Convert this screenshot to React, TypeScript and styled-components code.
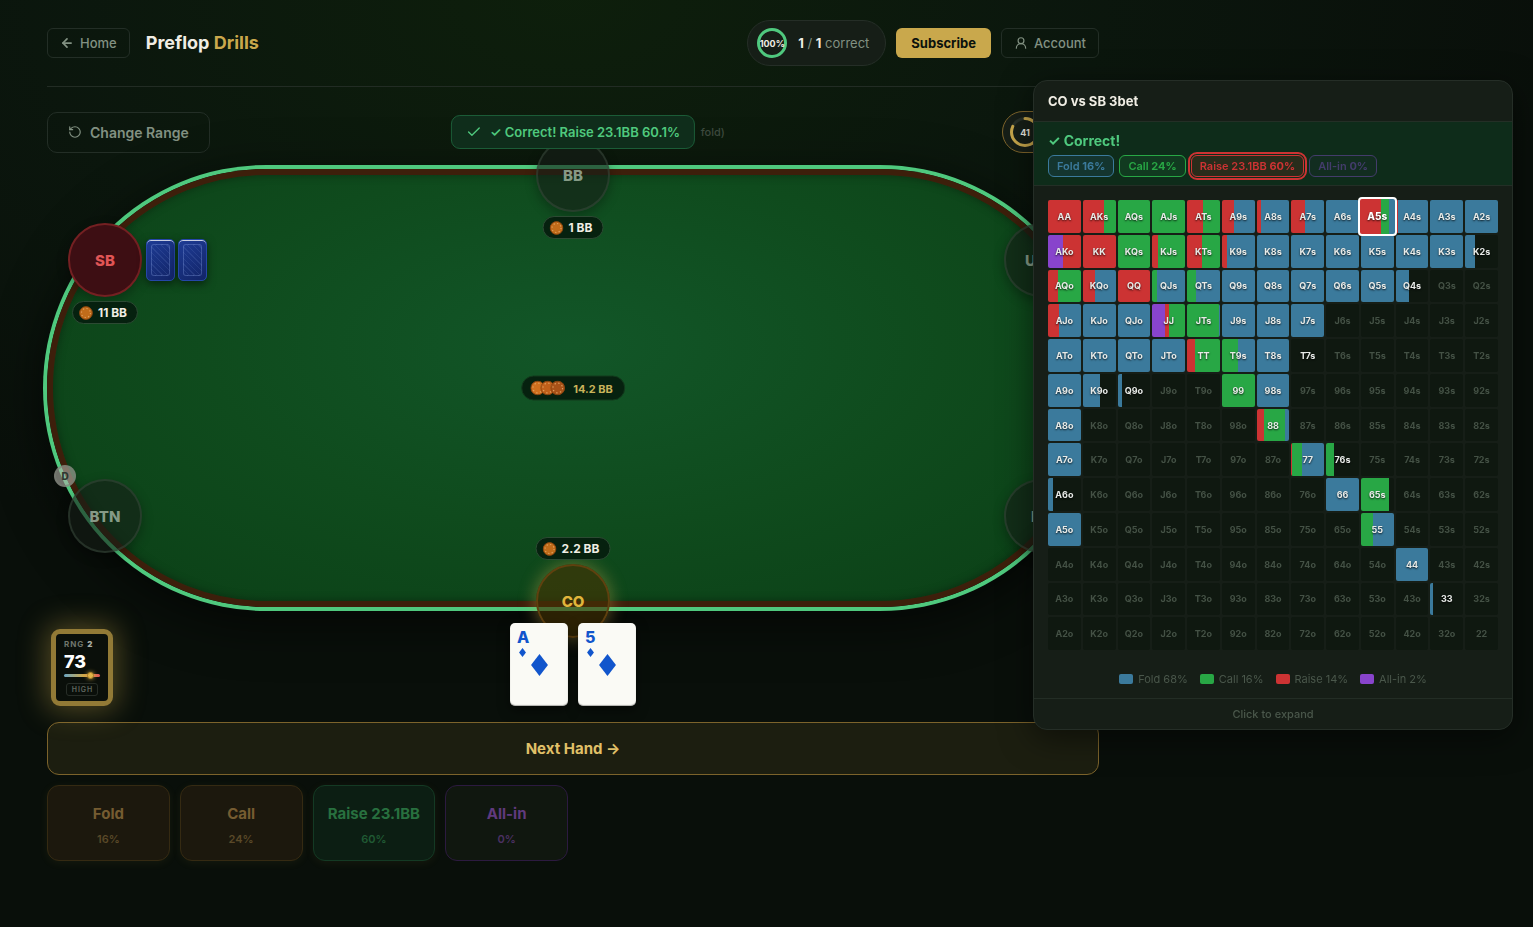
import React from 'react';
import styled, { createGlobalStyle, css } from 'styled-components';
import { ArrowLeft, Check, RotateCcw, UserRound } from 'lucide-react';

const GlobalStyle = createGlobalStyle`
  *, *::before, *::after { box-sizing: border-box; }
  body {
    margin: 0;
    min-height: 100vh;
    background:
      radial-gradient(ellipse 65% 65% at 37% 0%, rgba(15, 36, 12, 0.75), rgba(14, 34, 18, 0.4) 50%, transparent 100%),
      #090f0a;
    color: #f0ede4;
    font-family: Inter, "Liberation Sans", sans-serif;
    font-size: 13px;
  }
  button { font-family: inherit; cursor: pointer; }
  a { text-decoration: none; }
`;

const Shell = styled.div`
  padding-right: 387px;
`;

const Main = styled.main`
  max-width: 1100px;
  margin: 0 auto;
  padding: 0 24px 40px;
`;

const Header = styled.header`
  display: flex;
  align-items: center;
  justify-content: space-between;
  padding: 20px 0;
  border-bottom: 1px solid #222c24;
  margin-bottom: 24px;
`;

const Group = styled.div<{ $gap: number }>`
  display: flex;
  align-items: center;
  gap: ${(p) => p.$gap}px;
`;

const outline = css`
  display: inline-flex;
  align-items: center;
  background: transparent;
  border: 1px solid #232e26;
  color: #829182;
  font-weight: 500;
`;

const NavLink = styled.a`
  ${outline}
  gap: 6px;
  height: 30px;
  padding: 0 12px;
  border-radius: 6px;
  font-size: 13px;
`;

const Title = styled.h1`
  margin: 0;
  font-size: 18px;
  line-height: 24px;
  font-weight: 700;
  span { color: #c9a84c; }
`;

const Stats = styled.div`
  display: flex;
  align-items: center;
  gap: 11px;
  padding: 7px 16px 7px 9px;
  border: 1px solid #252e27;
  border-radius: 23px;
  background: #161e17;
  color: #829182;
  font-size: 13px;
  b { color: #f0ede4; font-weight: 700; }
`;

const Subscribe = styled.button`
  height: 30px;
  padding: 0 15px;
  border: 0;
  border-radius: 6px;
  background: #c9a84c;
  color: #0c120c;
  font-size: 13px;
  font-weight: 700;
`;

const RingBox = styled.div`
  display: grid;
  place-items: center;
  width: 30px;
  height: 30px;
  > * { grid-area: 1 / 1; }
  span { font-size: 9px; font-weight: 700; color: #f0ede4; }
`;

const Controls = styled.div`
  position: relative;
  display: flex;
  align-items: center;
  justify-content: space-between;
  margin-bottom: 16px;
`;

const ChangeRange = styled.button`
  ${outline}
  gap: 8px;
  height: 41px;
  padding: 0 20px;
  border-radius: 10px;
  font-size: 14px;
  font-weight: 600;
`;

const Hint = styled.div`
  min-width: 238px;
  text-align: right;
  font-size: 11px;
  font-weight: 500;
  color: #3e4b3f;
`;

const Timer = styled.div`
  width: 97px;
  padding: 5px 7px;
  border: 1px solid #80662c;
  border-radius: 21px;
  background: #161e17;
`;

const Toast = styled.div`
  position: absolute;
  z-index: 5;
  top: 4px;
  left: 50%;
  transform: translateX(-50%);
  display: flex;
  align-items: center;
  gap: 8px;
  height: 34px;
  padding: 0 14px;
  border: 1px solid #1b5c37;
  border-radius: 9px;
  background: #0f2d1b;
  color: #4fc97e;
  font-size: 13px;
  font-weight: 600;
  white-space: nowrap;
`;

const Table = styled.section`
  position: relative;
  aspect-ratio: 2.4;
  border: 6px solid #3d1f0b;
  border-radius: 999px;
  background: radial-gradient(ellipse at 50% 40%, #125628 0%, #0f4b1d 50%, #0b3f16 100%);
  box-shadow:
    0 0 0 4px #4fc97e,
    0 12px 50px 4px rgba(0, 0, 0, 0.6),
    inset 0 0 10px rgba(0, 0, 0, 0.35);
`;

type Tone = 'plain' | 'red' | 'gold';

const tones = {
  plain: css`
    background: rgba(22, 30, 23, 0.6);
    border-color: rgba(60, 76, 62, 0.5);
    color: rgba(155, 175, 155, 0.85);
  `,
  red: css`
    background: #3d0e13;
    border-color: #742022;
    color: #e05555;
  `,
  gold: css`
    background: rgba(70, 50, 4, 0.62);
    border-color: #60410f;
    color: #e0b53c;
    box-shadow: 0 0 16px 2px rgba(201, 168, 76, 0.4);
  `,
};

const Seat = styled.div<{ $x: number; $y: number; $tone: Tone }>`
  position: absolute;
  left: ${(p) => p.$x}%;
  top: ${(p) => p.$y}%;
  transform: translate(-50%, -50%);
  display: flex;
  align-items: center;
  justify-content: center;
  width: 74px;
  height: 74px;
  border: 2px solid;
  border-radius: 50%;
  box-shadow: 0 4px 12px rgba(0, 0, 0, 0.3);
  font-size: 15px;
  font-weight: 800;
  ${(p) => tones[p.$tone]}
`;

const Bet = styled.div<{ $above?: boolean }>`
  position: absolute;
  left: 50%;
  ${(p) => (p.$above ? 'bottom: calc(100% + 6px);' : 'top: calc(100% + 6px);')}
  transform: translateX(-50%);
  display: flex;
  align-items: center;
  gap: 5px;
  height: 23px;
  padding: 0 10px 0 6px;
  border: 1px solid #2c4a33;
  border-radius: 12px;
  background: #06210f;
  color: #f0ede4;
  font-size: 12px;
  font-weight: 700;
  white-space: nowrap;
`;

const Pot = styled.div`
  position: absolute;
  left: 50%;
  top: 50%;
  transform: translate(-50%, -50%);
  display: flex;
  align-items: center;
  gap: 8px;
  height: 25px;
  padding: 0 11px 0 8px;
  border: 1px solid #123a1c;
  border-radius: 13px;
  background: #06210f;
  color: #c9b35a;
  font-size: 11px;
  font-weight: 700;
  white-space: nowrap;
`;

const ChipStack = styled.div`
  display: flex;
  svg + svg { margin-left: -5px; }
`;

const BackCards = styled.div`
  position: absolute;
  left: calc(100% + 6px);
  top: 50%;
  transform: translateY(-50%);
  display: flex;
  gap: 3px;
`;

const BackCard = styled.div`
  width: 29px;
  height: 42px;
  padding: 4px;
  border: 1px solid #2546a8;
  border-radius: 5px;
  background: linear-gradient(145deg, #1e3c96, #122466);
  box-shadow: 0 3px 8px rgba(0, 0, 0, 0.5), inset 0 1px 0 rgba(255, 255, 255, 0.75);
  &::before {
    content: '';
    display: block;
    height: 100%;
    border: 1px solid rgba(130, 155, 220, 0.35);
    border-radius: 3px;
    background: repeating-linear-gradient(45deg, transparent 0 3px, rgba(130, 155, 220, 0.14) 3px 4px);
  }
`;

const Dealer = styled.div`
  position: absolute;
  left: -16px;
  top: -16px;
  display: flex;
  align-items: center;
  justify-content: center;
  width: 22px;
  height: 22px;
  border: 2px solid rgba(120, 125, 115, 0.6);
  border-radius: 50%;
  background: rgba(180, 180, 172, 0.6);
  color: #2f372f;
  font-size: 10px;
  font-weight: 800;
`;

const HandRow = styled.div`
  position: relative;
  z-index: 2;
  display: grid;
  grid-template-columns: 1fr auto 1fr;
  align-items: end;
  margin: 16px 0;
`;

const Rng = styled.div`
  display: flex;
  flex-direction: column;
  justify-self: start;
  width: 62px;
  height: 77px;
  margin-left: 4px;
  padding: 5px 8px;
  border: 5px solid #927a36;
  border-radius: 9px;
  background: #0a0f0a;
  box-shadow: 0 0 28px 5px rgba(201, 168, 76, 0.36);
`;

const RngLabel = styled.div`
  font-size: 8px;
  line-height: 10px;
  font-weight: 700;
  letter-spacing: 1px;
  color: #70766c;
  white-space: nowrap;
  b { color: #a9ada4; }
`;

const RngValue = styled.div`
  font-size: 18px;
  line-height: 25px;
  font-weight: 800;
  color: #ffffff;
`;

const RngBar = styled.div`
  position: relative;
  flex: none;
  height: 3px;
  border-radius: 2px;
  background: linear-gradient(90deg, #6aa6c4, #d0a848 55%, #e05555);
`;

const RngDot = styled.i`
  position: absolute;
  top: -2px;
  width: 7px;
  height: 7px;
  margin-left: -3px;
  border: 1px solid #a37b25;
  border-radius: 50%;
  background: #e2b548;
  box-shadow: 0 0 4px rgba(226, 181, 72, 0.8);
`;

const RngTag = styled.div`
  align-self: center;
  margin-top: 6px;
  padding: 0 4px 0 5px;
  border: 1px solid #272d27;
  border-radius: 3px;
  font-size: 7px;
  line-height: 11px;
  font-weight: 600;
  letter-spacing: 1px;
  color: #60675e;
`;

const Hand = styled.div`
  display: flex;
  gap: 10px;
`;

const Card = styled.div`
  display: flex;
  flex-direction: column;
  align-items: flex-start;
  width: 58px;
  height: 83px;
  padding: 4px 7px;
  border-radius: 5px;
  background: #fafaf5;
  box-shadow: 0 4px 12px rgba(0, 0, 0, 0.5), inset 0 -1px 1px rgba(0, 0, 0, 0.3);
  color: #1155cc;
  b { font-size: 16px; line-height: 20px; font-weight: 800; }
`;

const SmallPip = styled.svg`
  width: 7px;
  height: 9px;
  margin: 1px 2px 0;
`;

const BigPip = styled.svg`
  width: 17px;
  height: 22px;
  align-self: center;
  margin-top: -3px;
`;

const NextHand = styled.button`
  display: block;
  width: 100%;
  height: 53px;
  margin-bottom: 10px;
  border: 1px solid #7c632b;
  border-radius: 12px;
  background: rgba(201, 168, 76, 0.1);
  color: #e0c068;
  font-size: 15px;
  font-weight: 700;
`;

const Actions = styled.div`
  display: grid;
  grid-template-columns: repeat(auto-fill, minmax(120px, 1fr));
  gap: 10px;
`;

const actionTones = {
  brown: css`
    background: #1c180d;
    border-color: #352a12;
    color: #755c31;
    small { color: #5a4928; }
  `,
  green: css`
    background: #0c1e13;
    border-color: #143a24;
    color: #28703f;
    small { color: #205a34; }
  `,
  violet: css`
    background: #10170f;
    border-color: #2c1a40;
    color: #603a7e;
    box-shadow: none;
    small { color: #4b3062; }
  `,
};

const Action = styled.button<{ $tone: keyof typeof actionTones }>`
  display: flex;
  flex-direction: column;
  align-items: center;
  justify-content: center;
  gap: 8px;
  height: 76px;
  padding: 6px 0 0;
  border: 1px solid;
  border-radius: 12px;
  box-shadow: 0 2px 10px rgba(201, 168, 76, 0.07);
  font-size: 15px;
  line-height: 18px;
  font-weight: 700;
  white-space: nowrap;
  small { font-size: 11px; line-height: 16px; font-weight: 600; }
  ${(p) => actionTones[p.$tone]}
`;

const Panel = styled.aside`
  position: fixed;
  z-index: 20;
  top: 80px;
  right: 20px;
  width: 480px;
  overflow: hidden;
  border: 1px solid #252e27;
  border-radius: 14px;
  background: #161e17;
  box-shadow: 0 8px 32px rgba(0, 0, 0, 0.5);
`;

const PanelTitle = styled.h2`
  margin: 0;
  padding: 10px 14px;
  font-size: 13px;
  line-height: 20px;
  font-weight: 700;
`;

const Verdict = styled.div`
  padding: 9px 14px 8px;
  border: 1px solid #232f26;
  border-width: 1px 0;
  background: #0e2c1a;
  p {
    margin: 0 0 4px;
    font-size: 14px;
    line-height: 20px;
    font-weight: 700;
    color: #4fc97e;
  }
`;

const Chip = styled.span<{ $ink: string; $fill: string; $picked?: boolean }>`
  height: 22px;
  padding: 0 8px;
  border: 1px solid ${(p) => p.$ink};
  border-radius: 6px;
  background: ${(p) => p.$fill};
  color: ${(p) => p.$ink};
  font-size: 11px;
  line-height: 21px;
  font-weight: 600;
  white-space: nowrap;
  b { font-weight: 700; }
  ${(p) => p.$picked && css`outline: 2px solid ${p.$ink}; outline-offset: 1px;`}
`;

const Matrix = styled.table`
  display: grid;
  grid-template-columns: repeat(13, 1fr);
  gap: 2px;
  padding: 14px;
  tbody, tr { display: contents; }
`;

const Cell = styled.td<{ $state: 'off' | 'on' | 'picked' }>`
  display: flex;
  align-items: center;
  justify-content: center;
  aspect-ratio: 1;
  min-width: 0;
  padding: 0;
  border-radius: 2px;
  background-color: #0f1810;
  color: #445145;
  font-size: 9px;
  font-weight: 700;
  ${(p) => p.$state !== 'off' && css`
    color: #e8ebe8;
    text-shadow: 0 1px 2px rgba(0, 0, 0, 0.8);
  `}
  ${(p) => p.$state === 'picked' && css`
    position: relative;
    z-index: 1;
    margin: -1px;
    box-shadow: 0 0 0 2px #ffffff;
    color: #ffffff;
    font-size: 10px;
    font-weight: 800;
  `}
`;

const Legend = styled.div`
  display: flex;
  justify-content: center;
  gap: 12px;
  padding: 7px 0 11px;
  color: #4a574b;
  font-size: 11px;
  line-height: 16px;
  span { display: flex; align-items: center; gap: 5px; }
`;

const Swatch = styled.i<{ $color: string }>`
  width: 14px;
  height: 10px;
  border-radius: 2px;
  background: ${(p) => p.$color};
`;

const Expand = styled.button`
  display: block;
  width: 100%;
  height: 31px;
  padding: 0;
  border: 0;
  border-top: 1px solid #232d25;
  background: transparent;
  color: #4a574b;
  font-size: 11px;
  font-weight: 500;
`;

function Ring({ value, label, color, width }: { value: number; label: string; color: string; width: number }) {
  const r = 15 - width / 2;
  return (
    <RingBox>
      <svg width="30" height="30" viewBox="0 0 30 30" fill="none" aria-hidden="true">
        <circle cx="15" cy="15" r={r} stroke="#273029" strokeWidth={width} />
        <circle
          cx="15"
          cy="15"
          r={r}
          stroke={color}
          strokeWidth={width}
          strokeLinecap="round"
          pathLength={100}
          strokeDasharray={`${value} 100`}
          transform="rotate(-90 15 15)"
        />
      </svg>
      <span>{label}</span>
    </RingBox>
  );
}

function PokerChip({ size, fill = '#c06c1a' }: { size: number; fill?: string }) {
  return (
    <svg width={size} height={size} viewBox="0 0 14 14" aria-hidden="true">
      <circle cx="7" cy="7" r="6.4" fill={fill} stroke="#8a4510" strokeWidth="0.9" />
      <circle cx="7" cy="7" r="4.5" fill="none" stroke="#e0a060" strokeWidth="1.1" strokeDasharray="1.2 2.334" />
    </svg>
  );
}

const Diamond = () => <path d="M5 0 10 6.5 5 13 0 6.5Z" fill="currentColor" />;

function FaceCard({ rank }: { rank: string }) {
  return (
    <Card>
      <b>{rank}</b>
      <SmallPip viewBox="0 0 10 13" aria-hidden="true"><Diamond /></SmallPip>
      <BigPip viewBox="0 0 10 13" aria-hidden="true"><Diamond /></BigPip>
    </Card>
  );
}

const colors = { f: '#3b7a9c', c: '#28a745', r: '#cc3333', a: '#8844cc' };
type Move = keyof typeof colors;
type Mix = [Move, number][];

const ranks = 'AKQJT98765432'.split('');
const pure: Record<string, Move> = {};
const addPure = (move: Move, hands: string) => hands.split(' ').forEach((h) => { pure[h] = move; });
addPure('r', 'AA KK QQ');
addPure('c', 'AQs AJs KQs 99');
addPure('f', 'A6s A3s A2s K8s K7s K6s K5s K4s K3s Q9s Q8s Q7s Q6s Q5s KJo QJo J9s J8s J7s ATo KTo QTo JTo T8s A9o 98s A8o A7o 66 A5o 44');

const mixed: Record<string, Mix> = {
  AKs: [['r', 64], ['c', 36]],
  ATs: [['r', 48], ['c', 52]],
  A9s: [['r', 36], ['f', 64]],
  A8s: [['r', 12], ['f', 88]],
  A7s: [['r', 42], ['f', 58]],
  A5s: [['r', 60], ['c', 24], ['f', 16]],
  A4s: [['r', 6], ['f', 94]],
  AKo: [['a', 45], ['r', 55]],
  KJs: [['r', 18], ['c', 82]],
  KTs: [['r', 45], ['c', 55]],
  K9s: [['r', 15], ['f', 85]],
  K2s: [['f', 30]],
  AQo: [['r', 30], ['c', 70]],
  KQo: [['r', 36], ['f', 64]],
  QJs: [['c', 15], ['f', 85]],
  QTs: [['c', 27], ['f', 73]],
  Q4s: [['f', 40]],
  AJo: [['r', 33], ['f', 67]],
  JJ: [['a', 40], ['r', 12], ['c', 48]],
  JTs: [['c', 97], ['f', 3]],
  TT: [['r', 24], ['c', 76]],
  T9s: [['c', 48], ['f', 52]],
  T7s: [],
  K9o: [['f', 51]],
  Q9o: [['f', 12]],
  '88': [['r', 21], ['c', 68], ['f', 11]],
  '77': [['r', 3], ['c', 30], ['f', 67]],
  '76s': [['c', 24]],
  A6o: [['f', 15]],
  '65s': [['c', 86]],
  '55': [['c', 36], ['f', 64]],
  '33': [['f', 9]],
};

function handName(row: number, col: number) {
  if (row === col) return ranks[row] + ranks[row];
  return row < col ? `${ranks[row]}${ranks[col]}s` : `${ranks[col]}${ranks[row]}o`;
}

function mixOf(hand: string): Mix | undefined {
  return pure[hand] ? [[pure[hand], 100]] : mixed[hand];
}

function gradient(mix?: Mix) {
  if (!mix || mix.length === 0) return undefined;
  let at = 0;
  const stops = mix.map(([move, share]) => {
    const from = at;
    at += share;
    return `${colors[move]} ${from}% ${at}%`;
  });
  if (at < 100) stops.push(`transparent ${at}% 100%`);
  return `linear-gradient(90deg, ${stops.join(', ')})`;
}

const legend: [string, Move][] = [['Fold 68%', 'f'], ['Call 16%', 'c'], ['Raise 14%', 'r'], ['All-in 2%', 'a']];

const actions: [string, string, keyof typeof actionTones][] = [
  ['Fold', '16%', 'brown'],
  ['Call', '24%', 'brown'],
  ['Raise 23.1BB', '60%', 'green'],
  ['All-in', '0%', 'violet'],
];

function RangePanel() {
  return (
    <Panel>
      <PanelTitle>CO vs SB 3bet</PanelTitle>
      <Verdict>
        <p>✓ Correct!</p>
        <Group $gap={5}>
          <Chip $ink={colors.f} $fill="#14352f">Fold <b>16%</b></Chip>
          <Chip $ink={colors.c} $fill="#113a20">Call <b>24%</b></Chip>
          <Chip $ink={colors.r} $fill="#292c1b" $picked>Raise 23.1BB <b>60%</b></Chip>
          <Chip $ink="#433c6b" $fill="#122d20">All-in <b>0%</b></Chip>
        </Group>
      </Verdict>
      <Matrix>
        <tbody>
          {ranks.map((rank, row) => (
            <tr key={rank}>
              {ranks.map((_, col) => {
                const hand = handName(row, col);
                const mix = mixOf(hand);
                return (
                  <Cell
                    key={hand}
                    $state={hand === 'A5s' ? 'picked' : mix ? 'on' : 'off'}
                    style={{ backgroundImage: gradient(mix) }}
                  >
                    {hand}
                  </Cell>
                );
              })}
            </tr>
          ))}
        </tbody>
      </Matrix>
      <Legend>
        {legend.map(([label, move]) => (
          <span key={label}><Swatch $color={colors[move]} />{label}</span>
        ))}
      </Legend>
      <Expand>Click to expand</Expand>
    </Panel>
  );
}

export default function App() {
  return (
    <>
      <GlobalStyle />
      <Shell>
        <Main>
          <Header>
            <Group $gap={16}>
              <NavLink href="#home"><ArrowLeft size={14} strokeWidth={3} />Home</NavLink>
              <Title>Preflop <span>Drills</span></Title>
            </Group>
            <Group $gap={10}>
              <Stats>
                <Ring value={100} label="100%" color="#4fc97e" width={3} />
                <div><b>1</b> / <b>1</b> correct</div>
              </Stats>
              <Subscribe>Subscribe</Subscribe>
              <NavLink href="#account"><UserRound size={14} />Account</NavLink>
            </Group>
          </Header>

          <Controls>
            <ChangeRange><RotateCcw size={14} />Change Range</ChangeRange>
            <Hint>fold)</Hint>
            <Timer><Ring value={82} label="41" color="#c9a84c" width={3} /></Timer>
            <Toast role="status"><Check size={16} />✓ Correct! Raise 23.1BB 60.1%</Toast>
          </Controls>

          <Table>
            <Seat $x={50} $y={0} $tone="plain">
              BB
              <Bet><PokerChip size={14} />1 BB</Bet>
            </Seat>
            <Seat $x={95} $y={20} $tone="plain">UTG</Seat>
            <Seat $x={95} $y={80} $tone="plain">HJ</Seat>
            <Seat $x={50} $y={100} $tone="gold">
              CO
              <Bet $above><PokerChip size={14} />2.2 BB</Bet>
            </Seat>
            <Seat $x={5} $y={80} $tone="plain">
              BTN
              <Dealer>D</Dealer>
            </Seat>
            <Seat $x={5} $y={20} $tone="red">
              SB
              <Bet><PokerChip size={14} />11 BB</Bet>
              <BackCards><BackCard /><BackCard /></BackCards>
            </Seat>
            <Pot>
              <ChipStack>
                <PokerChip size={15} fill="#d0701e" />
                <PokerChip size={15} fill="#c0601a" />
                <PokerChip size={15} fill="#a85218" />
              </ChipStack>
              14.2 BB
            </Pot>
          </Table>

          <HandRow>
            <Rng>
              <RngLabel>RNG <b>2</b></RngLabel>
              <RngValue>73</RngValue>
              <RngBar><RngDot style={{ left: '73%' }} /></RngBar>
              <RngTag>HIGH</RngTag>
            </Rng>
            <Hand>
              <FaceCard rank="A" />
              <FaceCard rank="5" />
            </Hand>
          </HandRow>

          <NextHand>Next Hand →</NextHand>
          <Actions>
            {actions.map(([name, share, tone]) => (
              <Action key={name} $tone={tone} disabled>
                {name}
                <small>{share}</small>
              </Action>
            ))}
          </Actions>
        </Main>
      </Shell>
      <RangePanel />
    </>
  );
}
